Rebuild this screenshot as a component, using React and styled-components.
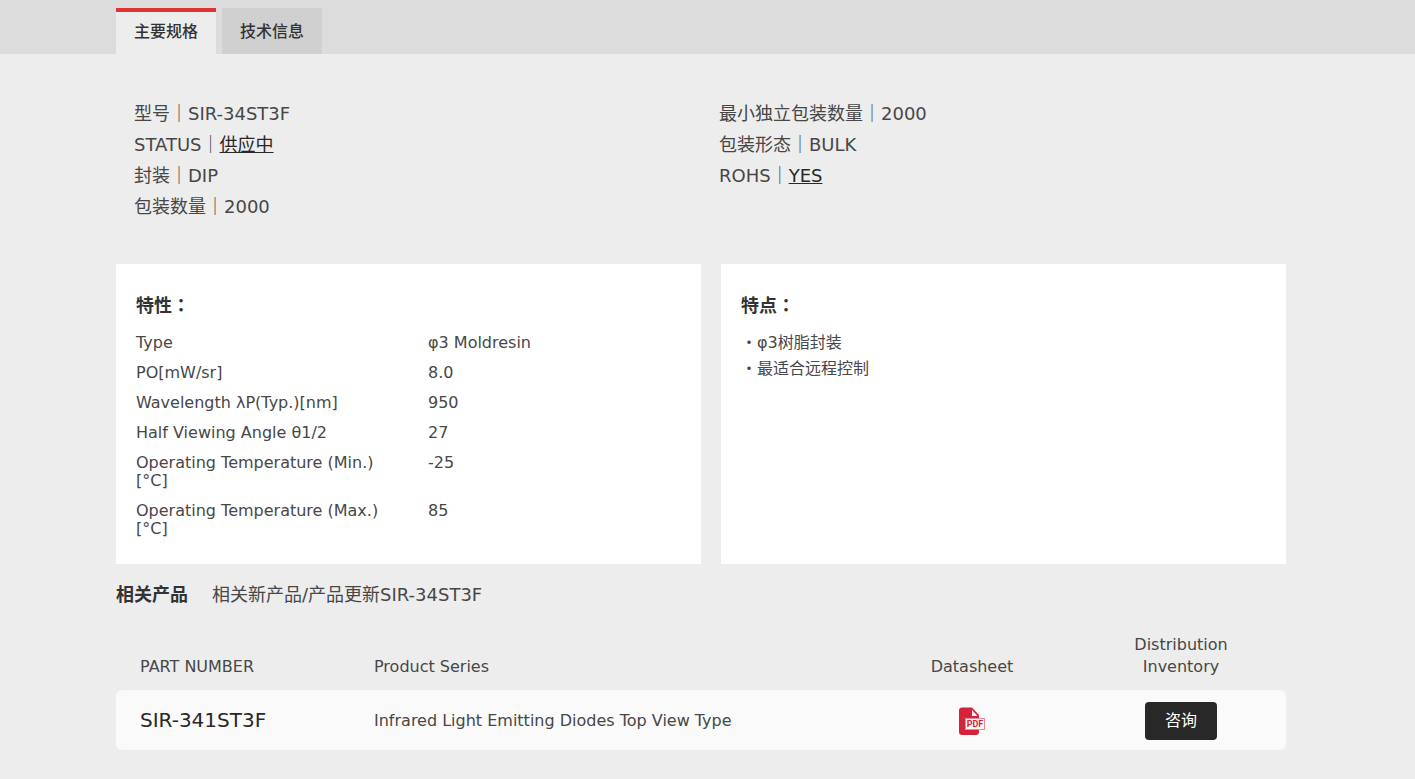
import React, { useState } from 'react';
import styled, { createGlobalStyle } from 'styled-components';

const GlobalStyle = createGlobalStyle`
  * {
    box-sizing: border-box;
  }

  body {
    margin: 0;
    background: #ededed;
    color: #474747;
    font-family: Verdana, "DejaVu Sans", "Noto Sans CJK SC", sans-serif;
    font-size: 16px;
  }
`;

const Page = styled.div`
  padding-bottom: 29px;
`;

const TabBar = styled.div`
  padding: 8px 13px 0 0;
  background: #dcdcdc;
`;

const Container = styled.div`
  max-width: 1170px;
  margin: 0 auto;
`;

const TabList = styled(Container)`
  display: flex;
  gap: 6px;
`;

const Tab = styled.button`
  width: 100px;
  height: 46px;
  padding: 0 0 2px;
  border: 0;
  border-top: 4px solid ${({ $active }) => ($active ? '#e03434' : '#d0d0d0')};
  background: ${({ $active }) => ($active ? '#ededed' : '#d0d0d0')};
  color: #333;
  font: inherit;
  font-weight: 500;
  line-height: 24px;
  cursor: pointer;
`;

const Main = styled.main`
  padding-right: 13px;
`;

const Specs = styled.div`
  display: grid;
  grid-template-columns: 1fr 1fr;
  padding: 44px 0 42px;
`;

const SpecList = styled.ul`
  margin: 0;
  padding: 0 18px;
  list-style: none;
  font-size: 18px;
  line-height: 31px;
`;

const SpecLink = styled.a`
  color: #282828;
  text-decoration: underline;
`;

const Cards = styled.div`
  display: grid;
  grid-template-columns: 1fr 1fr;
`;

const Card = styled.section`
  min-height: 300px;
  padding: 28px 20px 20px;
  background: #fff;

  & + & {
    margin-left: 20px;
  }
`;

const CardTitle = styled.h2`
  margin: 0 0 8px;
  color: #333;
  font-family: Verdana, "DejaVu Sans", "Noto Sans CJK JP", sans-serif;
  font-size: 18px;
  font-weight: bold;
  line-height: 28px;
`;

const CharTable = styled.table`
  width: 100%;
  border-collapse: collapse;
  table-layout: fixed;
  line-height: 18px;

  th,
  td {
    padding: 6px 20px 6px 0;
    font-weight: normal;
    text-align: left;
    vertical-align: top;
  }

  th {
    width: 292px;
  }
`;

const FeatureList = styled.ul`
  margin: 0;
  padding: 2px 0 0;
  list-style: none;
  line-height: 26px;
`;

const Related = styled.div`
  display: flex;
  align-items: baseline;
  gap: 24px;
  padding: 17px 0 25px;
  font-size: 18px;
  line-height: 28px;
`;

const RelatedTitle = styled.h2`
  margin: 0;
  color: #333;
  font-size: 18px;
  font-weight: bold;
`;

const RelatedText = styled.p`
  margin: 0;
`;

const ProductTable = styled.table`
  width: 100%;
  border-collapse: separate;
  border-spacing: 0;
  table-layout: fixed;
  line-height: 22px;
`;

const HeadCell = styled.th`
  width: ${({ $width }) => $width || 'auto'};
  padding: 0 ${({ $center }) => ($center ? '50px' : '24px')} 12px;
  font-weight: normal;
  text-align: ${({ $center }) => ($center ? 'center' : 'left')};
  vertical-align: bottom;
`;

const Cell = styled.td`
  height: 60px;
  padding: 2px 24px 0;
  background: #fafafa;
  text-align: ${({ $center }) => ($center ? 'center' : 'left')};

  &:first-child {
    border-radius: 6px 0 0 6px;
  }

  &:last-child {
    border-radius: 0 6px 6px 0;
  }
`;

const PartLink = styled.a`
  color: #282828;
  font-size: 20px;
  text-decoration: none;
`;

const PdfLink = styled.a`
  display: inline-flex;
  vertical-align: middle;
`;

const InquiryButton = styled.button`
  width: 72px;
  height: 38px;
  padding: 0;
  border: 0;
  border-radius: 4px;
  background: #282828;
  color: #fff;
  font: inherit;
  vertical-align: middle;
  cursor: pointer;
`;

const tabs = ['主要规格', '技术信息'];

// full-width punctuation
const BAR = '\uFF5C';
const COLON = '\uFF1A';

const characteristics = [
  ['Type', 'φ3 Moldresin'],
  ['PO[mW/sr]', '8.0'],
  ['Wavelength λP(Typ.)[nm]', '950'],
  ['Half Viewing Angle θ1/2', '27'],
  ['Operating Temperature (Min.) [°C]', '-25'],
  ['Operating Temperature (Max.) [°C]', '85']
];

const features = ['φ3树脂封装', '最适合远程控制'];

function PdfIcon() {
  return (
    <svg width="28" height="28" viewBox="0 0 28 28" aria-hidden="true">
      <path d="M4 .5h10l7 7.5v17q0 3-3 3H4q-3 0-3-3V3.500q0-3 3-3z" fill="#d5233b" />
      <path d="M14 3v6h5.500z" fill="#fafafa" />
      <rect x="7.5" y="11.5" width="19" height="11" fill="#fafafa" stroke="#e58a96" />
      <text
        x="17"
        y="20"
        fill="#d5233b"
        fontFamily="Roboto, Liberation Sans, sans-serif"
        fontSize="9"
        fontWeight="bold"
        textAnchor="middle"
      >
        PDF
      </text>
    </svg>
  );
}

function App() {
  const [activeTab, setActiveTab] = useState(0);

  return (
    <Page lang="zh-CN">
      <GlobalStyle />
      <TabBar>
        <TabList role="tablist">
          {tabs.map((tab, i) => (
            <Tab
              key={tab}
              role="tab"
              aria-selected={i === activeTab}
              $active={i === activeTab}
              onClick={() => setActiveTab(i)}
            >
              {tab}
            </Tab>
          ))}
        </TabList>
      </TabBar>

      <Main>
        <Container>
          <Specs>
            <SpecList>
              <li>型号{BAR}SIR-34ST3F</li>
              <li>
                STATUS{BAR}<SpecLink href="#status">供应中</SpecLink>
              </li>
              <li>封装{BAR}DIP</li>
              <li>包装数量{BAR}2000</li>
            </SpecList>
            <SpecList>
              <li>最小独立包装数量{BAR}2000</li>
              <li>包装形态{BAR}BULK</li>
              <li>
                ROHS{BAR}<SpecLink href="#rohs">YES</SpecLink>
              </li>
            </SpecList>
          </Specs>

          <Cards>
            <Card>
              <CardTitle lang="ja">特性{COLON}</CardTitle>
              <CharTable>
                <tbody>
                  {characteristics.map(([name, value]) => (
                    <tr key={name}>
                      <th scope="row">{name}</th>
                      <td>{value}</td>
                    </tr>
                  ))}
                </tbody>
              </CharTable>
            </Card>
            <Card>
              <CardTitle lang="ja">特点{COLON}</CardTitle>
              <FeatureList>
                {features.map((feature) => (
                  <li key={feature}>・{feature}</li>
                ))}
              </FeatureList>
            </Card>
          </Cards>

          <Related>
            <RelatedTitle>相关产品</RelatedTitle>
            <RelatedText>相关新产品/产品更新SIR-34ST3F</RelatedText>
          </Related>

          <ProductTable>
            <thead>
              <tr>
                <HeadCell scope="col" $width="20%">PART NUMBER</HeadCell>
                <HeadCell scope="col">Product Series</HeadCell>
                <HeadCell scope="col" $width="208px" $center>Datasheet</HeadCell>
                <HeadCell scope="col" $width="210px" $center>Distribution Inventory</HeadCell>
              </tr>
            </thead>
            <tbody>
              <tr>
                <Cell>
                  <PartLink href="#sir-341st3f">SIR-341ST3F</PartLink>
                </Cell>
                <Cell>Infrared Light Emitting Diodes Top View Type</Cell>
                <Cell $center>
                  <PdfLink href="#datasheet" aria-label="PDF">
                    <PdfIcon />
                  </PdfLink>
                </Cell>
                <Cell $center>
                  <InquiryButton>咨询</InquiryButton>
                </Cell>
              </tr>
            </tbody>
          </ProductTable>
        </Container>
      </Main>
    </Page>
  );
}

export default App;
